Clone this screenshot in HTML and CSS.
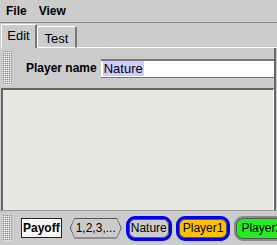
FILE: index.html
```html
<!DOCTYPE html>
<html lang="en">
<head>
    <meta charset="UTF-8">
    <title>Game editor</title>
    <link rel="stylesheet" href="styles.css">
</head>
<body>

<div class="menubar">
    <span class="menu">File</span>
    <span class="menu">View</span>
</div>

<div class="tabs">
    <span class="tab current">Edit</span>
    <span class="tab">Test</span>
    <span class="tabfill"></span>
</div>

<div class="toolbar">
    <svg class="grip" width="9" height="34"><defs><pattern id="dots" width="2" height="2" patternUnits="userSpaceOnUse"><rect width="1" height="1" fill="#8c8c8c"/><rect x="1" y="1" width="1" height="1" fill="#f0f0f0"/></pattern></defs><rect width="9" height="34" fill="url(#dots)"/></svg>
    <label class="label">Player name</label>
    <div class="field"><span class="sel">Nature</span></div>
</div>

<div class="canvas"></div>

<div class="bottombar">
    <svg class="grip small" width="9" height="26"><rect width="9" height="26" fill="url(#dots)"/></svg>
    <span class="btn">Payoff</span>
    <span class="hex"><span class="hexin">1,2,3,...</span></span>
    <span class="pill nature">Nature</span>
    <span class="pill p1">Player1</span>
    <span class="pill p2">Player2</span>
</div>

</body>
</html>
```

FILE: styles.css
```css
*{
    margin: 0;
    padding: 0;
    box-sizing: border-box;
}

body{
    width: 277px;
    height: 245px;
    overflow: hidden;
    background: #cccccc;
    font-family: "Liberation Sans", Arial, sans-serif;
    font-size: 12px;
    color: #000;
    display: flex;
    flex-direction: column;
}

/* menu */
.menubar{
    height: 23px;
    display: flex;
    align-items: center;
    gap: 12px;
    padding: 0 0 1px 6px;
    border-bottom: 1px solid #8a8a8a;
}
.menu{
    font-weight: bold;
}

/* tabs */
.tabs{
    height: 25px;
    display: flex;
    align-items: flex-end;
    padding-left: 1px;
}
.tab{
    height: 22px;
    width: 40px;
    font-size: 13px;
    display: flex;
    align-items: center;
    justify-content: center;
    padding-top: 2px;
    border-top: 1px solid #fff;
    border-left: 1px solid #fff;
    border-right: 2px solid #777;
    border-bottom: 1px solid #fff;
    border-radius: 2px 2px 0 0;
}
.tab.current{
    height: 24px;
    width: 36px;
    padding-top: 0;
    padding-bottom: 2px;
    border-bottom: 0;
}
.tabfill{
    flex: 1;
    border-bottom: 1px solid #fff;
}

/* toolbar */
.toolbar{
    height: 40px;
    display: flex;
    align-items: center;
    padding-left: 3px;
    border-right: 2px solid #666;
    margin-right: 1px;
}
.grip{
    flex: none;
    display: block;
    margin-right: 14px;
}
.label{
    font-weight: bold;
    margin-right: 4px;
}
.field{
    flex: 1;
    height: 19px;
    background: #fff;
    border-top: 2px solid #777;
    border-bottom: 1px solid #777;
    display: flex;
    align-items: center;
    padding-left: 2px;
    font-size: 13px;
}
.sel{
    background: #ccccff;
    padding: 0 1px;
}

/* drawing area */
.canvas{
    flex: 1;
    background: #e8e8e0;
    border-top: 2px solid #666;
    border-left: 2px solid #666;
    border-right: 1px solid #fff;
    margin: 0 3px 0 1px;
    box-shadow: 2px 0 0 #666;
}

/* bottom bar */
.bottombar{
    flex: none;
    height: 35px;
    display: flex;
    align-items: center;
    gap: 4px;
    padding-left: 3px;
    border-top: 1px solid #999;
    white-space: nowrap;
    overflow: hidden;
}
.grip.small{
    margin-right: 5px;
}
.btn{
    flex: none;
    height: 20px;
    padding: 0 1px;
    display: flex;
    align-items: center;
    font-weight: bold;
    background: #f4f4f0;
    border: 1px solid #222;
    box-shadow: inset 1px 1px 0 #fff;
    margin-right: 4px;
}
.hex{
    flex: none;
    height: 21px;
    padding: 1px;
    background: #555;
    clip-path: polygon(5px 0, calc(100% - 5px) 0, 100% 50%, calc(100% - 5px) 100%, 5px 100%, 0 50%);
}
.hexin{
    height: 19px;
    display: flex;
    align-items: center;
    padding: 0 5px;
    background: #cccccc;
    clip-path: polygon(4px 0, calc(100% - 4px) 0, 100% 50%, calc(100% - 4px) 100%, 4px 100%, 0 50%);
}
.pill{
    flex: none;
    height: 25px;
    display: flex;
    align-items: center;
    padding: 0 2px;
    border: 3px solid #0000ee;
    border-radius: 9px;
    box-shadow: inset 0 0 0 1px #555;
}
.nature{
    background: #cccccc;
}
.p1{
    background: #ffc000;
    padding: 0 4px;
}
.p2{
    background: #22ee22;
    border: 2px solid #888;
    padding: 0 4px 0 5px;
}
```
